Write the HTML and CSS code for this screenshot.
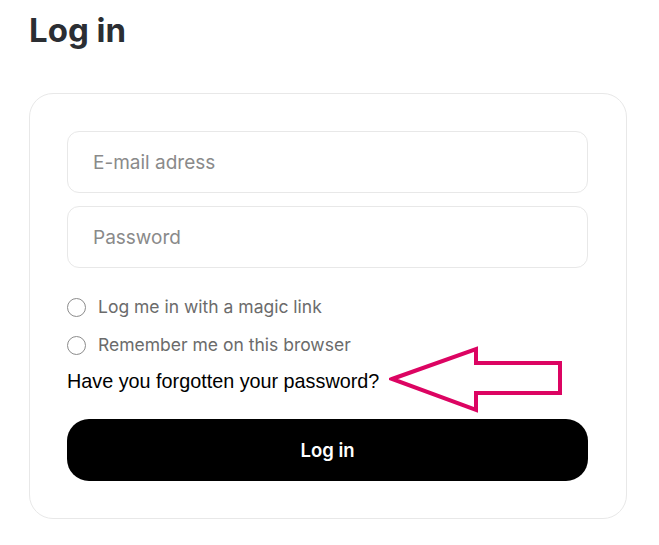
FILE: index.html
```html
<!DOCTYPE html>
<html lang="en">
<head>
  <meta charset="UTF-8">
  <meta name="viewport" content="width=device-width, initial-scale=1.0">
  <title>Log in</title>
  <link rel="stylesheet" href="styles.css">
</head>
<body>
  <div class="page">
    <h1 class="title">Log in</h1>

    <form class="login-card">
      <input class="field" type="email" placeholder="E-mail adress">
      <input class="field" type="password" placeholder="Password">

      <div class="options">
        <label class="radio-item">
          <span class="radio"></span>
          Log me in with a magic link
        </label>
        <label class="radio-item">
          <span class="radio"></span>
          Remember me on this browser
        </label>
        <div class="forgot-row">
          <a class="forgot-link" href="#">Have you forgotten your password?</a>
          <svg class="arrow" width="176" height="70" viewBox="0 0 176 70" fill="none">
            <path d="M3 34 L87 4 L87 18 L171 18 L171 48 L87 48 L87 65 Z" stroke="#DC0462" stroke-width="4" stroke-linejoin="miter"/>
          </svg>
        </div>
      </div>

      <button class="submit-btn" type="button">Log in</button>
    </form>
  </div>
</body>
</html>
```

FILE: styles.css
```css
:root {
  --text-primary: #000000;
  --text-title: #2B2E33;
  --text-secondary: #6B6B6B;
  --placeholder: #8A8A8A;
  --border-color: #E8E8E8;
  --radius-card: 24px;
}

* {
  box-sizing: border-box;
  margin: 0;
  padding: 0;
}

body {
  font-family: Inter, "Noto Sans", sans-serif;
  background-color: #FFFFFF;
  color: var(--text-primary);
  -webkit-font-smoothing: antialiased;
}

.page {
  width: 598px;
  padding: 10px 0 0 29px;
  box-sizing: content-box;
}

.title {
  font-size: 33px;
  font-weight: 700;
  line-height: 40px;
  color: var(--text-title);
  margin-bottom: 43px;
}

.login-card {
  border: 1px solid var(--border-color);
  border-radius: var(--radius-card);
  padding: 37px 38px 37px 37px;
  display: flex;
  flex-direction: column;
}

.field {
  width: 100%;
  height: 62px;
  border: 1px solid var(--border-color);
  border-radius: 12px;
  padding: 0 25px;
  font-family: inherit;
  font-size: 19px;
  color: var(--text-primary);
  background: #FFFFFF;
  outline: none;
}

.field + .field {
  margin-top: 13px;
}

.field::placeholder {
  color: var(--placeholder);
}

.options {
  display: flex;
  flex-direction: column;
  margin-top: 27px;
}

.radio-item {
  display: flex;
  align-items: center;
  gap: 12px;
  font-size: 17.5px;
  line-height: 24px;
  color: var(--text-secondary);
  margin-bottom: 14px;
  cursor: pointer;
}

.radio {
  width: 19px;
  height: 19px;
  border: 1.5px solid #8C8C8C;
  border-radius: 50%;
  flex-shrink: 0;
}

.forgot-row {
  position: relative;
  height: 24px;
  margin-top: -2px;
}

.forgot-link {
  font-family: "Liberation Sans", Arial, sans-serif;
  font-size: 19.8px;
  line-height: 24px;
  color: var(--text-primary);
  text-decoration: none;
}

.arrow {
  position: absolute;
  left: 322px;
  top: -24px;
}

.submit-btn {
  margin-top: 26px;
  height: 62px;
  width: 100%;
  border: none;
  border-radius: 22px;
  background-color: #000000;
  color: #FFFFFF;
  font-family: inherit;
  font-size: 18.5px;
  font-weight: 600;
  cursor: pointer;
}
```
